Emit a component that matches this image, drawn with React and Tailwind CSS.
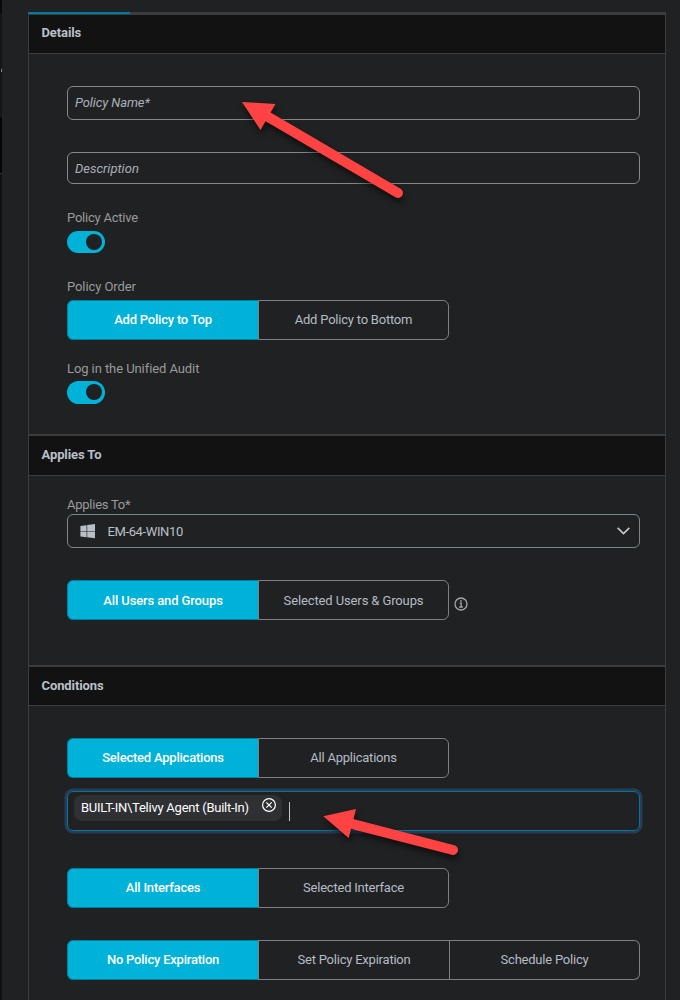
const ON = "bg-[#00b1d8] text-white font-medium border-y border-[#00829f]";
const OFF = "text-[#b4bcc6] border-y border-r border-[#7d7f82]";

function Segmented({ options, wide, className = "pb-px tracking-[-0.22px]" }) {
  return (
    <div
      className={`grid h-10 shrink-0 ${
        wide ? "w-[573px] grid-cols-[191px_192px_190px]" : "w-[382px] grid-cols-2"
      }`}
    >
      {options.map((option, i) => (
        <button
          key={option}
          className={`first:rounded-l-md first:border-l last:rounded-r-md whitespace-nowrap ${className} ${
            i === 0 ? ON : OFF
          } ${i === 1 ? "border-l border-l-[#7d7f82]" : ""}`}
        >
          {option}
        </button>
      ))}
    </div>
  );
}

function Toggle({ className }) {
  return (
    <button
      role="switch"
      aria-checked="true"
      className={`flex w-[38px] items-start justify-end rounded-full bg-[#00b1d8] pr-[3px] pt-[3px] ${className}`}
    >
      <span className="size-4 rounded-full bg-[#202122]" />
    </button>
  );
}

function SectionHeader({ title, className }) {
  return (
    <h2
      className={`flex items-center border-b border-[#3b3c3e] bg-[#121212] pl-[12.5px] font-bold tracking-[-0.1px] text-[#b9c0c9] ${className}`}
    >
      {title}
    </h2>
  );
}

function WindowsIcon() {
  return (
    <svg width="15" height="15" viewBox="0 0 15 15" fill="#b9bfc6">
      <path d="M.4 2 6.6 1.2V7H.4zM7.2 1.1 15 0V7H7.2z" />
      <path d="M.4 7.6H6.6V13.2L.4 12.4zM7.2 7.6H15V14.3L7.2 13.3z" />
    </svg>
  );
}

function InfoIcon() {
  return (
    <svg width="14" height="14" viewBox="0 0 14 14" fill="none" stroke="#a4a5a7">
      <circle cx="7" cy="7" r="6" strokeWidth="1.3" />
      <path d="M5.6 6.2H7.2V10M5.2 10H8.8" strokeWidth="1.3" />
      <path d="M6.2 4H7.8" strokeWidth="1.6" />
    </svg>
  );
}

// Red callout arrows drawn over the form
function Arrows() {
  return (
    <svg
      className="pointer-events-none absolute inset-0 drop-shadow-[1px_4px_3px_rgba(0,0,0,0.55)]"
      width="680"
      height="1000"
      fill="#ff4343"
      stroke="#ff4343"
    >
      <path d="M242 102 275.5 104 260.5 130z" stroke="none" />
      <path d="M266 115.6 398 193" strokeWidth="10" strokeLinecap="round" />
      <path d="M323.3 816.3 356 809 348.7 838z" stroke="none" />
      <path d="M350 823.3 453 850" strokeWidth="10" strokeLinecap="round" />
    </svg>
  );
}

export default function App() {
  return (
    <div className="relative flex h-[1000px] w-[680px] overflow-hidden bg-[#202122] font-[Roboto,sans-serif] text-[13px] leading-4 text-[#989a9c]">
      {/* edge of the page behind the panel */}
      <div className="flex w-0.5 flex-col bg-[#101112]">
        <div className="h-[13px] bg-[#08090a]" />
        <div className="h-14 bg-[#151617]" />
        <div className="ml-px h-[3px] bg-[#6d8ba0]" />
        <div className="h-[45px] bg-[#151617]" />
        <div className="h-14 bg-[#060607]" />
        <div className="h-px bg-[#303133]" />
      </div>

      <main className="ml-[26px] mt-3 w-[638px]">
        <div className="h-[3px] bg-[#3b3c3e]">
          <div className="h-0.5 w-[102px] bg-[#007b9b]" />
        </div>

        <div className="h-[985px] border-x border-[#3b3c3e]">
          <section className="h-[419px]">
            <SectionHeader title="Details" className="h-[39px] pb-[3px]" />
            <div className="mr-[-13px] flex flex-col items-start px-[38px] pt-8">
              <input
                placeholder="Policy Name*"
                className="h-[34px] w-[573px] rounded-md border border-[#85878a] px-[7px] pb-0.5 italic tracking-[-0.1px] outline-none placeholder:text-[#a9b0b9]"
              />
              <input
                placeholder="Description"
                className="mt-8 h-8 w-[573px] rounded-md border border-[#85878a] px-[7px] italic outline-none placeholder:text-[#a9b0b9]"
              />
              <label className="mt-[26px] tracking-[-0.22px]">Policy Active</label>
              <Toggle className="mt-[5px] h-[22px]" />
              <label className="mb-[5px] mt-[26px] tracking-[-0.08px]">Policy Order</label>
              <Segmented options={["Add Policy to Top", "Add Policy to Bottom"]} />
              <label className="mt-[21px] tracking-[-0.08px]">Log in the Unified Audit</label>
              <Toggle className="mt-1 h-[23px]" />
            </div>
          </section>

          <section className="h-[231px] border-t-2 border-[#3b3c3e]">
            <SectionHeader title="Applies To" className="h-10 pb-px" />
            <div className="mr-[-13px] px-[38px] pt-[21px]">
              <label className="block tracking-[-0.25px]">Applies To*</label>
              <button className="mt-px flex h-[34px] w-[573px] items-center rounded-md border border-[#78868e] pl-3 pr-[9px] text-[#b9c0c9]">
                <WindowsIcon />
                <span className="ml-[12.5px] mr-auto pt-0.5 tracking-[-0.38px]">EM-64-WIN10</span>
                <svg width="13" height="8" viewBox="0 0 13 8" fill="none" stroke="#c6cdd1" strokeWidth="1.5">
                  <path d="M.7.9 6.5 6.6 12.3.9" />
                </svg>
              </button>
              <div className="mt-8 flex">
                <Segmented
                  options={["All Users and Groups", "Selected Users & Groups"]}
                  className="pt-px tracking-[-0.12px]"
                />
                <span className="ml-[5px] mt-[17px]">
                  <InfoIcon />
                </span>
              </div>
            </div>
          </section>

          <section className="border-t-2 border-[#3b3c3e]">
            <SectionHeader title="Conditions" className="h-[39px]" />
            <div className="mr-[-13px] px-[38px] pt-8">
              <Segmented options={["Selected Applications", "All Applications"]} />
              <div className="mt-[13px] flex h-10 w-[573px] rounded-md border border-[#00789b] pl-1.5 pt-[3px] ring-[2.5px] ring-[#2a3b58]">
                <span className="flex h-[26px] w-[208px] rounded-lg bg-[#2e3033] pl-[7px] pr-1.5 pt-[5px] text-white">
                  <span className="mr-auto whitespace-nowrap tracking-[-0.25px]">BUILT-IN\Telivy Agent (Built-In)</span>
                  <svg className="-mt-0.5" width="14" height="14" viewBox="0 0 14 14" fill="none" stroke="#fff" strokeWidth="1.2">
                    <circle cx="7" cy="7" r="6.4" />
                    <path d="M4.3 4.3 9.7 9.7M9.7 4.3 4.3 9.7" />
                  </svg>
                </span>
                <span className="ml-[7px] mt-[7px] h-[19px] w-px bg-[#c4c6c8]" />
              </div>
              <div className="mt-[37px]">
                <Segmented options={["All Interfaces", "Selected Interface"]} />
              </div>
              <div className="mt-8">
                <Segmented wide options={["No Policy Expiration", "Set Policy Expiration", "Schedule Policy"]} />
              </div>
            </div>
          </section>
        </div>
      </main>

      <Arrows />
    </div>
  );
}
